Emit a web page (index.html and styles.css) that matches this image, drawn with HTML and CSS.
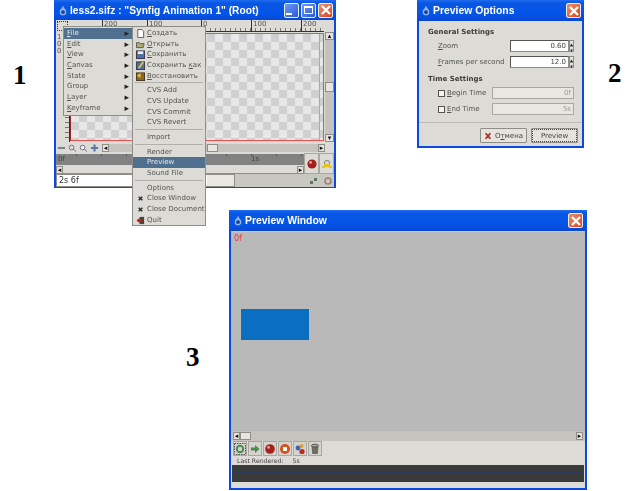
FILE: index.html
```html
<!DOCTYPE html>
<html lang="ru">
<head>
  <meta charset="UTF-8" />
  <title>Synfig preview</title>
  <link rel="stylesheet" href="styles.css">
</head>
<body>
  <div class="num num1">1</div>
  <div class="num num2">2</div>
  <div class="num num3">3</div>

  <!-- main canvas window -->
  <div class="win win-main">
    <div class="titlebar">
      <svg class="appicon" viewBox="0 0 10 12"><path d="M5 0 L6.5 3 L9 6 V10 L7 12 H3 L1 10 V6 L3.5 3 Z" fill="#8fb4e8"/><circle cx="5" cy="8" r="2.4" fill="#1b3f94"/></svg>
      <span class="title">less2.sifz : "Synfig Animation 1" (Root)</span>
      <span class="winbtn blue"><i class="min"></i></span>
      <span class="winbtn blue"><i class="max"></i></span>
      <span class="winbtn close">
        <svg viewBox="0 0 12 12"><path d="M2 2 L10 10 M10 2 L2 10" stroke="#fff" stroke-width="2.4"/></svg>
      </span>
    </div>
    <div class="rulerrow">
      <span class="corner"></span>
      <div class="ruler-h">
        <span class="mark m1">200</span>
        <span class="mark m2">100</span>
        <span class="mark m3">0</span>
        <span class="mark m4">100</span>
        <span class="mark m5">200</span>
      </div>
    </div>
    <div class="canvasrow">
      <div class="ruler-v"><span>1</span><span>0</span><span>0</span></div>
      <div class="canvas"><div class="canvas-edge"></div></div>
      <div class="vscroll">
        <span class="sbtn">&#9652;</span>
        <span class="vtrack"><i></i></span>
        <span class="sbtn">&#9662;</span>
      </div>
    </div>
    <div class="toolrow">
      <svg class="tool" viewBox="0 0 10 8"><rect x="1" y="3" width="8" height="2" fill="#778"/></svg>
      <svg class="tool" viewBox="0 0 10 8"><circle cx="4" cy="3.5" r="2.6" fill="#ddd" stroke="#667"/><path d="M6 5.5 L9 8" stroke="#667"/></svg>
      <svg class="tool" viewBox="0 0 10 8"><circle cx="4" cy="3.5" r="2.6" fill="#eee" stroke="#667"/><path d="M6 5.5 L9 8" stroke="#667"/></svg>
      <svg class="tool" viewBox="0 0 10 8"><path d="M5 0 V8 M1 4 H9" stroke="#5a78a8" stroke-width="2.4"/></svg>
      <div class="hbar">
        <span class="sbtn small">&#9666;</span>
        <span class="htrack main-track"><span class="hthumb"></span></span>
        <span class="sbtn small">&#9656;</span>
      </div>
    </div>
    <div class="timerow">
      <div class="timeleft">
        <div class="timeline"><span>0f</span><span class="t1">1s</span></div>
        <div class="timeslider"><span class="sbtn small">&#9666;</span><span class="slidetrack"></span><span class="sbtn small">&#9656;</span></div>
      </div>
      <div class="timebtn">
        <svg viewBox="0 0 12 12"><circle cx="6" cy="6" r="4.6" fill="#a5201c"/><circle cx="4.6" cy="4.4" r="1.4" fill="#e8a29c"/></svg>
      </div>
      <div class="timebtn">
        <svg viewBox="0 0 12 12"><path d="M3 5 a3 3 0 0 1 6 0 V6 H8 V5 a2 2 0 0 0 -4 0 V6 H3 Z" fill="#888"/><rect x="3" y="6" width="6" height="3" fill="#e4c21c"/><path d="M1 9 H4 M8 9 H11" stroke="#d8b818" stroke-width="1.4"/></svg>
      </div>
    </div>
    <div class="statusrow">
      <span class="timefield">2s 6f</span>
      <span class="statusfill"></span>
      <svg class="stat" viewBox="0 0 10 10"><rect x="1" y="5" width="3" height="3" fill="#5a7a5a"/><rect x="5" y="2" width="3" height="3" fill="#5a7a5a"/></svg>
      <svg class="stat" viewBox="0 0 10 10"><circle cx="5" cy="5" r="3" fill="none" stroke="#a08070" stroke-width="1.6"/></svg>
    </div>
  </div>

  <!-- File menu over the main window -->
  <div class="menu menu-root">
    <div class="mi active"><u>F</u>ile<b>&#9656;</b></div>
    <div class="mi"><u>E</u>dit<b>&#9656;</b></div>
    <div class="mi"><u>V</u>iew<b>&#9656;</b></div>
    <div class="mi"><u>C</u>anvas<b>&#9656;</b></div>
    <div class="mi">State<b>&#9656;</b></div>
    <div class="mi">Group<b>&#9656;</b></div>
    <div class="mi"><u>L</u>ayer<b>&#9656;</b></div>
    <div class="mi"><u>K</u>eyframe<b>&#9656;</b></div>
  </div>
  <div class="menu menu-file">
    <div class="mi icon">
      <svg viewBox="0 0 10 10"><path d="M2 0.5 H6.5 L8.5 2.5 V9.5 H2 Z" fill="#fff" stroke="#555"/></svg>
      <u>С</u>оздать
    </div>
    <div class="mi icon">
      <svg viewBox="0 0 10 10"><path d="M0.5 3 H4 L5 4 H9 L8 8.5 H0.5 Z" fill="#b0ab70" stroke="#554"/></svg>
      <u>О</u>ткрыть
    </div>
    <div class="mi icon">
      <svg viewBox="0 0 10 10"><rect x="0.5" y="1" width="9" height="8.5" fill="#4f6fa8" stroke="#334"/><rect x="2" y="1.5" width="6" height="3" fill="#eee"/></svg>
      <u>С</u>охранить
    </div>
    <div class="mi icon">
      <svg viewBox="0 0 10 10"><rect x="0.5" y="1" width="9" height="8.5" fill="#4f6fa8" stroke="#334"/><path d="M3 8 L8 1" stroke="#e8c040" stroke-width="2"/></svg>
      Сохранить <u>к</u>ак
    </div>
    <div class="mi icon">
      <svg viewBox="0 0 10 10"><rect x="0.5" y="1" width="9" height="8.5" fill="#8a6a20" stroke="#432"/><path d="M1 4 L5 1 V7 Z" fill="#e8c040"/></svg>
      <u>В</u>осстановить
    </div>
    <div class="sep"></div>
    <div class="mi icon">CVS Add</div>
    <div class="mi icon">CVS Update</div>
    <div class="mi icon">CVS Commit</div>
    <div class="mi icon">CVS Revert</div>
    <div class="sep"></div>
    <div class="mi icon">Import</div>
    <div class="sep"></div>
    <div class="mi icon">Render</div>
    <div class="mi icon active">Preview</div>
    <div class="mi icon">Sound File</div>
    <div class="sep"></div>
    <div class="mi icon">Options</div>
    <div class="mi icon">
      <svg viewBox="0 0 10 10"><path d="M3 3 L7 7 M7 3 L3 7" stroke="#333" stroke-width="1.8"/></svg>
      Close Window
    </div>
    <div class="mi icon">
      <svg viewBox="0 0 10 10"><path d="M3 3 L7 7 M7 3 L3 7" stroke="#333" stroke-width="1.8"/></svg>
      Close Document
    </div>
    <div class="mi icon">
      <svg viewBox="0 0 10 10"><rect x="4" y="1" width="5" height="8" fill="#444"/><path d="M0.5 5 L4 2 V4 H7 V6 H4 V8 Z" fill="#c02018"/></svg>
      Quit
    </div>
  </div>

  <!-- preview options dialog -->
  <div class="win win-options">
    <div class="titlebar">
      <svg class="appicon" viewBox="0 0 10 12"><path d="M5 0 L6.5 3 L9 6 V10 L7 12 H3 L1 10 V6 L3.5 3 Z" fill="#8fb4e8"/><circle cx="5" cy="8" r="2.4" fill="#1b3f94"/></svg>
      <span class="title">Preview Options</span>
      <span class="winbtn close">
        <svg viewBox="0 0 12 12"><path d="M2 2 L10 10 M10 2 L2 10" stroke="#fff" stroke-width="2.4"/></svg>
      </span>
    </div>
    <div class="optbody">
      <div class="grouphead">General Settings</div>
      <div class="optrow">
        <span class="optlabel"><u>Z</u>oom</span>
        <span class="spin"><span class="field">0.60</span><span class="arrows"><i>&#9652;</i><i>&#9662;</i></span></span>
      </div>
      <div class="optrow">
        <span class="optlabel"><u>F</u>rames per second</span>
        <span class="spin"><span class="field">12.0</span><span class="arrows"><i>&#9652;</i><i>&#9662;</i></span></span>
      </div>
      <div class="grouphead second">Time Settings</div>
      <div class="optrow">
        <span class="check"></span>
        <span class="optlabel short"><u>B</u>egin Time</span>
        <span class="field off">0f</span>
      </div>
      <div class="optrow">
        <span class="check"></span>
        <span class="optlabel short"><u>E</u>nd Time</span>
        <span class="field off">5s</span>
      </div>
    </div>
    <div class="optfoot">
      <span class="btn">
        <svg viewBox="0 0 10 10"><path d="M2 1.5 L8 8.5 M8 1.5 L2 8.5" stroke="#b02a20" stroke-width="2.2"/></svg>
        <span>О<u>т</u>мена</span>
      </span>
      <span class="btn focus">Preview</span>
    </div>
  </div>

  <!-- preview window -->
  <div class="win win-preview">
    <div class="titlebar">
      <svg class="appicon" viewBox="0 0 10 12"><path d="M5 0 L6.5 3 L9 6 V10 L7 12 H3 L1 10 V6 L3.5 3 Z" fill="#8fb4e8"/><circle cx="5" cy="8" r="2.4" fill="#1b3f94"/></svg>
      <span class="title">Preview Window</span>
      <span class="winbtn close">
        <svg viewBox="0 0 12 12"><path d="M2 2 L10 10 M10 2 L2 10" stroke="#fff" stroke-width="2.4"/></svg>
      </span>
    </div>
    <div class="stage">
      <span class="framelabel">0f</span>
      <div class="rect"></div>
    </div>
    <div class="prevscroll">
      <span class="sbtn small">&#9666;</span>
      <span class="htrack"><span class="hthumb"></span></span>
      <span class="sbtn small">&#9656;</span>
    </div>
    <div class="prevtools">
      <div class="tbtns">
        <span class="tbtn"><svg viewBox="0 0 12 12"><rect x="0.5" y="0.5" width="11" height="11" fill="none" stroke="#555" stroke-dasharray="1.5 1"/><circle cx="6" cy="6" r="3.2" fill="none" stroke="#4d8a4d" stroke-width="2"/></svg></span>
        <span class="tbtn"><svg viewBox="0 0 12 12"><path d="M2 4.5 H6 V2 L10.5 6 L6 10 V7.5 H2 Z" fill="#4d8a4d"/></svg></span>
        <span class="tbtn"><svg viewBox="0 0 12 12"><circle cx="6" cy="6" r="4.8" fill="#a5201c"/><circle cx="4.6" cy="4.4" r="1.4" fill="#e8a29c"/></svg></span>
        <span class="tbtn"><svg viewBox="0 0 12 12"><circle cx="6" cy="6" r="5" fill="#d8501c"/><rect x="4" y="4" width="4" height="4" fill="#fff"/></svg></span>
        <span class="tbtn"><svg viewBox="0 0 12 12"><circle cx="4" cy="5" r="2.4" fill="#3c64a8"/><circle cx="7.5" cy="3" r="2" fill="#d8a030"/><circle cx="8" cy="8.5" r="2.6" fill="#c02820"/></svg></span>
        <span class="tbtn"><svg viewBox="0 0 12 12"><path d="M2.5 3 H9.5 L8.8 11 H3.2 Z" fill="#6b6f60"/><ellipse cx="6" cy="2.6" rx="3.6" ry="1.4" fill="#a8aa98" stroke="#555"/></svg></span>
      </div>
      <div class="lastrendered"><span>Last Rendered:</span><span>5s</span></div>
    </div>
    <div class="darkbar"></div>
    <div class="prevfoot"></div>
  </div>
</body>
</html>
```

FILE: styles.css
```css
body {
  margin: 0;
  width: 640px;
  height: 491px;
  overflow: hidden;
  position: relative;
  background: #fff;
  font-family: 'DejaVu Sans', sans-serif;
  font-size: 7px;
  color: #55554f;
}

.num {
  position: absolute;
  font-family: 'Liberation Serif', serif;
  font-weight: bold;
  font-size: 27px;
  line-height: 30px;
  color: #000;
}
.num1 { left: 13px; top: 60px; }
.num2 { left: 608px; top: 58px; }
.num3 { left: 186px; top: 342px; }

/* windows */
.win {
  position: absolute;
  box-sizing: border-box;
  display: flex;
  flex-direction: column;
  background: #dcdbd6;
  border: 2px solid #0c48e4;
  border-top: 0;
  filter: blur(0.45px);
}
.win-main { left: 54px; top: 0; width: 282px; height: 188px; }
.win-options { left: 417px; top: 0; width: 167px; height: 148px; }
.win-preview { left: 229px; top: 210px; width: 358px; height: 280px; }

.titlebar {
  flex: none;
  display: flex;
  align-items: center;
  gap: 3px;
  height: 20px;
  margin: 0 -2px;
  padding: 0 3px 0 5px;
  background: linear-gradient(#1f6cf0 0, #0a57e4 3px, #0254e8 14px, #0a48d0 100%);
  color: #fff;
  font-family: 'Liberation Sans', sans-serif;
  font-size: 10.4px;
  font-weight: bold;
}
.appicon { flex: none; width: 8px; height: 11px; }
.title { flex: 1; white-space: nowrap; }
.win-preview .titlebar, .win-options .titlebar { height: 21px; }

.winbtn {
  flex: none;
  width: 15px;
  height: 15px;
  box-sizing: border-box;
  border: 1px solid #e8eefc;
  border-radius: 2px;
  display: flex;
  align-items: center;
  justify-content: center;
}
.winbtn.blue { background: linear-gradient(135deg, #6f9cf4, #2a58d8); }
.winbtn.close { background: linear-gradient(135deg, #ee9070, #d4441c); }
.win-main .titlebar { gap: 2px; }
.win-main .title { margin-left: 1px; font-size: 10.2px; }
.win-preview .winbtn { margin-right: 1px; }
.winbtn svg { width: 12px; height: 12px; }
.winbtn .min { width: 6px; height: 2px; background: #fff; margin: 8px 5px 0 0; }
.winbtn .max { width: 9px; height: 8px; border: 1px solid #fff; border-top-width: 2px; box-sizing: border-box; }

/* main window parts */
.rulerrow { flex: none; display: flex; height: 12px; }
.corner {
  flex: none;
  width: 11px;
  height: 10px;
  margin: 1px 2px 0 1px;
  border: 1px dotted #333;
  box-sizing: border-box;
}
.ruler-h {
  flex: 1;
  position: relative;
  margin-right: 10px;
  background: repeating-linear-gradient(90deg, #77766f 0 1px, transparent 1px 5px) 0 100% / 100% 3px no-repeat;
  border-bottom: 1px solid #333;
}
.mark { position: absolute; top: 0; padding-left: 1px; border-left: 1px solid #333; height: 11px; line-height: 9px; font-size: 7px; }
.m1 { left: 32px; }
.m2 { left: 77px; }
.m3 { left: 131px; }
.m4 { left: 181px; }
.m5 { left: 231px; }

.canvasrow { flex: none; display: flex; height: 110px; }
.ruler-v {
  flex: none;
  width: 14px;
  box-sizing: border-box;
  border-right: 1px solid #333;
  display: flex;
  flex-direction: column;
  padding: 2px 0 0 1px;
  line-height: 7px;
  font-size: 7px;
  background: repeating-linear-gradient(#77766f 0 1px, transparent 1px 5px) 100% 0 / 4px 100% no-repeat;
}
.canvas {
  flex: 1;
  position: relative;
  margin-top: 1px;
  box-sizing: border-box;
  border: 1px solid #e85050;
  border-left-color: #8a2a2a;
  height: 108px;
  background: repeating-conic-gradient(#cfcfcf 0 25%, #e8e8e8 0 50%) 0 0 / 16px 16px;
}
.canvas-edge { position: absolute; right: 3px; top: 0; bottom: 0; width: 1px; background: #aaa; }
.vscroll {
  flex: none;
  width: 9px;
  margin-left: 1px;
  display: flex;
  flex-direction: column;
  background: #c4c3bd;
}
.vtrack { flex: 1; position: relative; display: block; }
.vtrack i { position: absolute; left: 0; right: 0; top: 42px; height: 10px; background: #e6e5e0; border: 1px solid #8e8d88; box-sizing: border-box; }
.sbtn {
  flex: none;
  display: flex;
  align-items: center;
  justify-content: center;
  width: 9px;
  height: 8px;
  font-size: 7px;
  line-height: 8px;
  background: #e4e3de;
  color: #111;
  border: 1px solid #8e8d88;
  box-sizing: border-box;
}
.sbtn.small { width: 7px; }

.toolrow { flex: none; display: flex; align-items: center; height: 11px; padding: 0 9px 0 1px; gap: 2px; }
.tool { flex: none; width: 9px; height: 8px; }
.hbar { flex: 1; display: flex; align-items: center; margin-left: 1px; }
.htrack { flex: 1; display: flex; align-self: stretch; align-items: center; background: #c4c3bd; }
.hthumb { flex: none; width: 11px; height: 8px; background: #e6e5e0; border: 1px solid #8e8d88; box-sizing: border-box; }
.main-track { padding-left: 98px; margin: 1px 0; }

.timerow { flex: none; display: flex; height: 21px; }
.timeleft { flex: 1; display: flex; flex-direction: column; min-width: 0; }
.timeline {
  height: 11px;
  margin-top: 1px;
  background: repeating-linear-gradient(90deg, #55554f 0 1px, transparent 1px 25px) 20px 0 / 100% 2px no-repeat #828282;
  display: flex;
  padding-left: 2px;
  line-height: 11px;
  color: #444;
}
.timeline .t1 { margin-left: 186px; }
.timeslider { height: 8px; margin-top: 1px; display: flex; background: #e4e3de; }
.slidetrack { flex: 1; background: #dcdbd6; border-bottom: 1px solid #8e8d88; }
.timebtn {
  flex: none;
  width: 15px;
  box-sizing: border-box;
  border: 1px solid #a8a7a2;
  display: flex;
  align-items: center;
  justify-content: center;
}
.timebtn svg { width: 12px; height: 12px; }

.statusrow { flex: 1; display: flex; align-items: center; background: #c8c7c1; padding-right: 1px; gap: 2px; }
.timefield {
  flex: none;
  width: 179px;
  align-self: stretch;
  background: linear-gradient(90deg, #fff 150px, #e8e7e2 150px);
  border: 1px solid #8e8d88;
  box-sizing: border-box;
  padding-left: 2px;
  line-height: 11px;
  font-size: 8px;
  color: #333;
}
.statusfill { flex: 1; }
.stat { flex: none; width: 10px; height: 10px; margin-left: 2px; }

/* popup menus */
.menu {
  position: absolute;
  top: 26px;
  box-sizing: border-box;
  padding-top: 1px;
  background: #dcdbd6;
  border: 1px solid #8e8d88;
  font-size: 7px;
  filter: blur(0.45px);
}
.menu-root { left: 63px; width: 70px; height: 90px; }
.menu-file { left: 132px; width: 74px; height: 200px; }
.mi {
  position: relative;
  height: 10.67px;
  line-height: 10.67px;
  padding-left: 3px;
  white-space: nowrap;
}
.mi b { position: absolute; right: 3px; top: 0; font-size: 9px; color: #222; font-weight: normal; }
.mi.icon { padding-left: 14px; }
.mi svg { position: absolute; left: 3px; top: 1px; width: 9px; height: 9px; }
.mi.active { background: #50708f; color: #e8e8e8; }
.sep { height: 4px; box-sizing: border-box; margin: 0 2px; padding-top: 1px; }
.sep::before { content: ""; display: block; height: 1px; background: #b0afaa; }

/* options dialog */
.optbody { flex: 1; padding: 5px 8px 0 9px; font-size: 7px; }
.grouphead { font-weight: bold; line-height: 12px; color: #3c3c38; margin-bottom: 2px; font-size: 7px; }
.grouphead.second { margin-top: 5px; margin-bottom: 2px; }
.optrow { display: flex; align-items: center; height: 12px; margin-bottom: 4px; padding-left: 10px; }
.optlabel { flex: 1; white-space: nowrap; }
.optlabel.short { flex: none; width: 45px; }
.spin { display: flex; flex: none; width: 64px; height: 12px; }
.field {
  flex: 1;
  box-sizing: border-box;
  height: 12px;
  line-height: 11px;
  text-align: right;
  padding-right: 2px;
  background: #fff;
  border: 1px solid #8e8d88;
  border-top-color: #55554f;
  border-left-color: #55554f;
  color: #444;
}
.field.off { background: #e8e7e2; color: #9a9994; border-color: #a8a7a2; }
.arrows { display: flex; flex-direction: column; width: 5px; }
.arrows i { height: 6px; line-height: 6px; font-size: 5px; font-style: normal; text-align: center; background: #e4e3de; color: #222; border: 0.5px solid #8e8d88; box-sizing: border-box; }
.check { width: 7px; height: 7px; margin-right: 2px; border: 1px solid #55554f; background: #f2f2ee; box-sizing: border-box; flex: none; }
.optfoot {
  flex: none;
  display: flex;
  justify-content: flex-end;
  gap: 4px;
  height: 24px;
  padding: 5px 4px 0 0;
  box-sizing: border-box;
  border-top: 1px solid #bcbbb6;
}
.btn {
  display: flex;
  align-items: center;
  justify-content: center;
  gap: 3px;
  width: 47px;
  height: 15px;
  box-sizing: border-box;
  background: #e4e3de;
  border: 1px solid #8e8d88;
  border-radius: 1px;
  color: #444;
}
.btn svg { width: 8px; height: 8px; }
.btn.focus { outline: 1px dotted #444; outline-offset: -2px; }

/* preview window */
.stage { flex: none; position: relative; height: 200px; background: #b9b9b9; border-top: 1px solid #c8c8c8; box-sizing: border-box; }
.framelabel { position: absolute; left: 3px; top: 2px; color: #e03a3a; font-size: 8px; line-height: 10px; }
.rect { position: absolute; left: 10px; top: 77px; width: 68px; height: 31px; background: #0a6fc0; }
.prevscroll { flex: none; display: flex; align-items: center; height: 10px; background: #c4c3bd; padding: 0 2px; }
.prevtools { flex: none; height: 24px; background: #dcdbd6; padding-left: 2px; font-size: 6.2px; }
.tbtns { display: flex; gap: 1px; height: 15px; }
.tbtn {
  width: 14px;
  height: 15px;
  box-sizing: border-box;
  border: 1px solid #a8a7a2;
  display: flex;
  align-items: center;
  justify-content: center;
  background: #d4d3ce;
}
.tbtn svg { width: 12px; height: 12px; }
.lastrendered { display: flex; gap: 9px; padding-left: 4px; line-height: 9px; color: #444; }
.darkbar {
  flex: none;
  height: 17px;
  margin: 0 1px;
  background: linear-gradient(#3a3a3a 0 7px, #2c3c58 7px 9px, #3a3a3a 9px);
}
.prevfoot { flex: 1; }
```
